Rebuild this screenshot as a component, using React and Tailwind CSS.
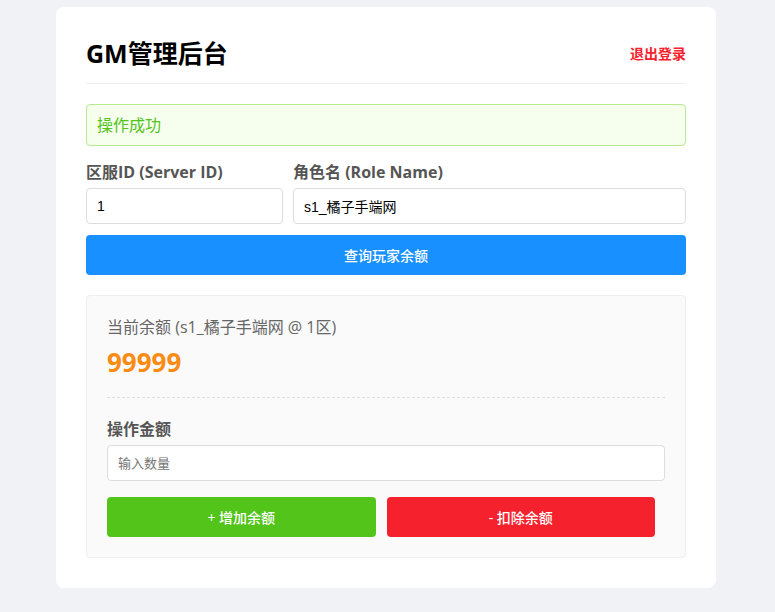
import React, { useState } from 'react';

const font = { fontFamily: '"Segoe UI", "Open Sans", "Noto Sans CJK SC", sans-serif' };
const inputFont = { fontFamily: '"Liberation Sans", "Noto Sans CJK SC", sans-serif' };

const App = () => {
  const [serverId, setServerId] = useState('1');
  const [roleName, setRoleName] = useState('s1_橘子手端网');
  const [amount, setAmount] = useState('');

  return (
    <div className="min-h-[612px] bg-[#f0f2f5] pt-[7px] pb-[24px]" style={font}>
      <div className="ml-[56px] w-[660px] bg-white rounded-lg p-[30px]">
        {/* Header */}
        <div className="flex items-center justify-between pb-[14px] border-b border-[#eee]">
          <h2 className="text-[25px] leading-[32px] font-bold text-black">GM管理后台</h2>
          <a className="text-[14px] font-bold text-[#f5222d] cursor-pointer">退出登录</a>
        </div>

        {/* Alert */}
        <div className="mt-[20px] px-[10px] py-[9px] border border-[#b7eb8f] bg-[#f6ffed] text-[#52c41a] text-[16px] leading-[22px] rounded">
          操作成功
        </div>

        {/* Query form */}
        <div className="mt-[15px] flex gap-[10px]">
          <div className="w-[197px] flex flex-col">
            <label className="text-[16px] leading-[22px] font-bold text-[#555] mb-[5px]">区服ID (Server ID)</label>
            <input
              value={serverId}
              onChange={(e) => setServerId(e.target.value)}
              className="h-[36px] px-[10px] border border-[#ddd] rounded text-[14px] text-black outline-none"
              style={inputFont}
            />
          </div>
          <div className="flex-1 flex flex-col">
            <label className="text-[16px] leading-[22px] font-bold text-[#555] mb-[5px]">角色名 (Role Name)</label>
            <input
              value={roleName}
              onChange={(e) => setRoleName(e.target.value)}
              className="h-[36px] px-[10px] border border-[#ddd] rounded text-[14px] text-black outline-none"
              style={inputFont}
            />
          </div>
        </div>

        <button className="mt-[11px] w-full h-[40px] bg-[#1890ff] text-white text-[14px] font-medium rounded">
          查询玩家余额
        </button>

        {/* Balance panel */}
        <div className="mt-[20px] bg-[#fafafa] border border-[#eee] rounded p-[20px]">
          <div className="text-[16px] leading-[22px] text-[#666]">当前余额 (s1_橘子手端网 @ 1区)</div>
          <div className="mt-[6px] text-[26px] leading-[36px] font-bold text-[#fa8c16]">99999</div>

          <div className="mt-[17px] pt-[20px] border-t border-dashed border-[#ddd]">
            <label className="block text-[16px] leading-[22px] font-bold text-[#555] mb-[5px]">操作金额</label>
            <input
              value={amount}
              onChange={(e) => setAmount(e.target.value)}
              placeholder="输入数量"
              className="w-full h-[36px] px-[10px] border border-[#ddd] rounded text-[13px] bg-white outline-none placeholder:text-[#757575]"
              style={inputFont}
            />
            <div className="mt-[16px] flex gap-[11px] w-[548px]">
              <button className="flex-1 h-[40px] bg-[#52c41a] text-white text-[14px] font-medium rounded">
                + 增加余额
              </button>
              <button className="flex-1 h-[40px] bg-[#f5222d] text-white text-[14px] font-medium rounded">
                - 扣除余额
              </button>
            </div>
          </div>
        </div>
      </div>
    </div>
  );
};

export default App;
